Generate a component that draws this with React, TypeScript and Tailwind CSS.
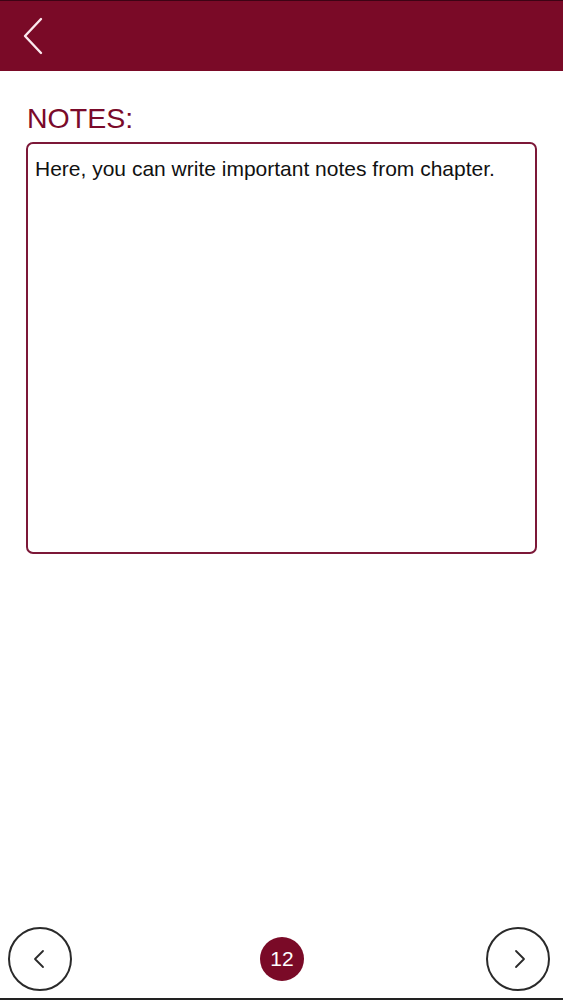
import React from "react";

export default function App() {
  return (
    <div
      className="w-[563px] h-[1000px] bg-white flex flex-col overflow-hidden"
      style={{ fontFamily: '"Liberation Sans", Arial, sans-serif' }}
    >
      <header className="h-[71px] shrink-0 bg-[#7a0a27] border-t border-[#3d0314] flex items-center pl-[22px]">
        <svg width="22" height="38" viewBox="0 0 22 38" fill="none">
          <path d="M19 2 L3 19 L19 36" stroke="#fbe9ee" strokeWidth="2.4" strokeLinecap="round" strokeLinejoin="round" />
        </svg>
      </header>

      <main className="flex-1 px-[26px] pt-[31px]">
        <h1 className="pl-[1px] text-[28.5px] leading-[32px] text-[#7a0a2a]">NOTES:</h1>
        <div className="mt-[8px] w-[511px] h-[412px] border-2 border-[#7c1838] rounded-[7px] px-[7px] pt-[13px]">
          <p className="text-[21px] leading-[24px] text-[#111]">
            Here, you can write important notes from chapter.
          </p>
        </div>
      </main>

      <footer className="shrink-0 flex items-center justify-between pl-[8px] pr-[13px] pb-[7px]">
        <button className="w-[64px] h-[64px] rounded-full border-2 border-[#2a2a2a] flex items-center justify-center">
          <svg width="16" height="22" viewBox="0 0 16 22" fill="none" className="mr-[3px]">
            <path d="M12 3 L4 11 L12 19" stroke="#2a2a2a" strokeWidth="1.8" strokeLinecap="round" strokeLinejoin="round" />
          </svg>
        </button>
        <div className="w-[44px] h-[44px] rounded-full bg-[#7a0a27] text-white text-[21px] flex items-center justify-center ml-[6px]">
          12
        </div>
        <button className="w-[64px] h-[64px] rounded-full border-2 border-[#2a2a2a] flex items-center justify-center">
          <svg width="16" height="22" viewBox="0 0 16 22" fill="none" className="ml-[3px]">
            <path d="M4 3 L12 11 L4 19" stroke="#2a2a2a" strokeWidth="1.8" strokeLinecap="round" strokeLinejoin="round" />
          </svg>
        </button>
      </footer>
      <div className="h-[2px] shrink-0 bg-[#222]" />
    </div>
  );
}
